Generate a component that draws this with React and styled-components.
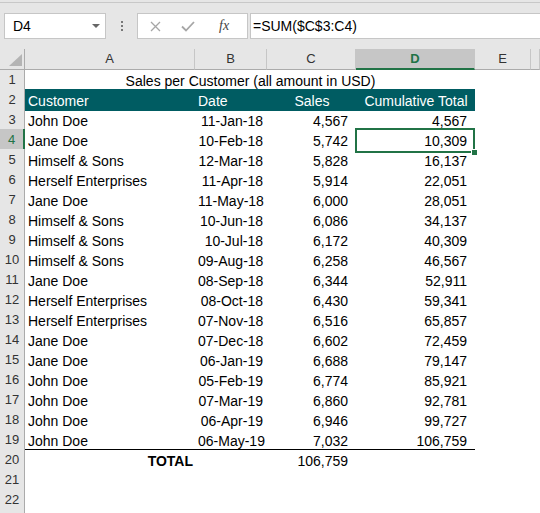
import React from "react";
import styled, { createGlobalStyle, css } from "styled-components";

const GREEN = "#217346";
const TEAL = "#005c62";
const COLS = "25px 170px 72px 89px 119px 56px 1fr";

const rows = [
  ["John Doe", "11-Jan-18", "4,567", "4,567"],
  ["Jane Doe", "10-Feb-18", "5,742", "10,309"],
  ["Himself & Sons", "12-Mar-18", "5,828", "16,137"],
  ["Herself Enterprises", "11-Apr-18", "5,914", "22,051"],
  ["Jane Doe", "11-May-18", "6,000", "28,051"],
  ["Himself & Sons", "10-Jun-18", "6,086", "34,137"],
  ["Himself & Sons", "10-Jul-18", "6,172", "40,309"],
  ["Himself & Sons", "09-Aug-18", "6,258", "46,567"],
  ["Jane Doe", "08-Sep-18", "6,344", "52,911"],
  ["Herself Enterprises", "08-Oct-18", "6,430", "59,341"],
  ["Herself Enterprises", "07-Nov-18", "6,516", "65,857"],
  ["Jane Doe", "07-Dec-18", "6,602", "72,459"],
  ["Jane Doe", "06-Jan-19", "6,688", "79,147"],
  ["John Doe", "05-Feb-19", "6,774", "85,921"],
  ["John Doe", "07-Mar-19", "6,860", "92,781"],
  ["John Doe", "06-Apr-19", "6,946", "99,727"],
  ["John Doe", "06-May-19", "7,032", "106,759"],
];

const GlobalStyle = createGlobalStyle`
  html, body {
    margin: 0;
    overflow: hidden;
    background: #fff;
    font-family: "Liberation Sans", Arial, sans-serif;
  }
`;

const Page = styled.div`
  width: 540px;
  height: 513px;
  overflow: hidden;
`;

//Formula bar
const RibbonEdge = styled.div`
  height: 2px;
  background: #e6e6e6;
  border-bottom: 1px solid #c8c8c8;
`;

const Toolbar = styled.div`
  display: flex;
  align-items: flex-start;
  height: 46px;
  box-sizing: border-box;
  padding: 10px 0 0 4px;
  background: #e6e6e6;
`;

const NameBox = styled.div`
  display: flex;
  align-items: center;
  justify-content: space-between;
  width: 102px;
  height: 26px;
  box-sizing: border-box;
  padding: 0 5px 0 8px;
  background: #fff;
  border: 1px solid #c6c6c6;
  font-size: 14px;
  color: #000;
`;

const Caret = styled.span`
  width: 0;
  height: 0;
  border-left: 4px solid transparent;
  border-right: 4px solid transparent;
  border-top: 4px solid #666;
`;

const Dots = styled.div`
  display: flex;
  flex-direction: column;
  align-items: center;
  justify-content: center;
  gap: 2px;
  width: 31px;
  height: 26px;
  span {
    width: 2px;
    height: 2px;
    background: #777;
  }
`;

const FxBox = styled.div`
  display: flex;
  align-items: center;
  width: 111px;
  height: 26px;
  box-sizing: border-box;
  padding-left: 12px;
  gap: 20px;
  background: #fff;
  border: 1px solid #c6c6c6;
  margin-right: 2px;
`;

const Fx = styled.span`
  font-family: "Liberation Serif", "Times New Roman", serif;
  font-style: italic;
  font-size: 14px;
  color: #444;
  margin-left: 4px;
`;

const FormulaInput = styled.div`
  flex: 1;
  height: 26px;
  box-sizing: border-box;
  padding-left: 2px;
  background: #fff;
  border: 1px solid #c6c6c6;
  border-right: none;
  font-size: 14px;
  line-height: 24px;
  color: #000;
`;

//Grid
const Row = styled.div`
  display: grid;
  grid-template-columns: ${COLS};
  height: 20px;
`;

const ColHead = styled.div`
  box-sizing: border-box;
  padding-top: 1px;
  background: ${(p) => (p.$active ? "#c6c6c6" : "#e6e6e6")};
  border-right: 1px solid #c6c6c6;
  border-bottom: ${(p) => (p.$active ? `2px solid ${GREEN}` : "1px solid #ababab")};
  font-size: 13px;
  line-height: 18px;
  text-align: center;
  color: ${(p) => (p.$active ? GREEN : "#333")};
  font-weight: ${(p) => (p.$active ? "bold" : "normal")};
`;

const Corner = styled(ColHead)`
  position: relative;
  border-right: 1px solid #ababab;
  svg {
    position: absolute;
    right: 2px;
    bottom: 3px;
  }
`;

const RowHead = styled.div`
  box-sizing: border-box;
  padding-top: 1px;
  background: ${(p) => (p.$active ? "#c6c6c6" : "#e6e6e6")};
  border-right: ${(p) => (p.$active ? `2px solid ${GREEN}` : "1px solid #ababab")};
  border-bottom: 1px solid #cfcfcf;
  font-size: 13px;
  line-height: 19px;
  text-align: center;
  color: ${(p) => (p.$active ? GREEN : "#333")};
`;

const Cell = styled.div`
  position: relative;
  box-sizing: border-box;
  padding: ${(p) => (p.$pad === "num" ? "2px 8px 0 3px" : p.$pad === "date" ? "2px 4px 0 3px" : "2px 2px 0 3px")};
  font-size: 14px;
  line-height: 20px;
  white-space: nowrap;
  text-align: ${(p) => p.$align || "left"};
  font-weight: ${(p) => (p.$bold ? "bold" : "normal")};
  color: #000;
  ${(p) => p.$span && css`grid-column: ${p.$span};`}
  ${(p) =>
    p.$head &&
    css`
      background: ${TEAL};
      color: #fff;
    `}
  ${(p) =>
    p.$rule &&
    css`
      box-shadow: inset 0 1px 0 #000;
    `}
  ${(p) =>
    p.$selected &&
    css`
      &::before {
        content: "";
        position: absolute;
        left: -1px;
        right: 0;
        top: -1px;
        bottom: -2px;
        border: 2px solid ${GREEN};
      }
      &::after {
        content: "";
        position: absolute;
        right: -2px;
        bottom: -4px;
        width: 5px;
        height: 5px;
        background: ${GREEN};
        border-left: 1px solid #fff;
        border-top: 1px solid #fff;
      }
    `}
`;

const Close = () => (
  <svg width="11" height="11" viewBox="0 0 11 11">
    <path d="M1 1 L10 10 M10 1 L1 10" stroke="#a6a6a6" strokeWidth="1.3" fill="none" />
  </svg>
);

const Check = () => (
  <svg width="14" height="11" viewBox="0 0 14 11">
    <path d="M1 5.5 L5 9.5 L13 1" stroke="#a6a6a6" strokeWidth="1.8" fill="none" />
  </svg>
);

const App = () => {
  return (
    <Page>
      <GlobalStyle />
      <RibbonEdge />
      <Toolbar>
        <NameBox>
          D4
          <Caret />
        </NameBox>
        <Dots>
          <span />
          <span />
          <span />
        </Dots>
        <FxBox>
          <Close />
          <Check />
          <Fx>fx</Fx>
        </FxBox>
        <FormulaInput>=SUM($C$3:C4)</FormulaInput>
      </Toolbar>

      <Row>
        <Corner>
          <svg width="13" height="12" viewBox="0 0 13 12">
            <path d="M13 0 L13 12 L0 12 Z" fill="#b4b4b4" />
          </svg>
        </Corner>
        {["A", "B", "C", "D", "E", ""].map((c) => (
          <ColHead key={c} $active={c === "D"}>
            {c}
          </ColHead>
        ))}
      </Row>

      <Row>
        <RowHead>1</RowHead>
        <Cell $span="2 / 6" $align="center">
          Sales per Customer (all amount in USD)
        </Cell>
      </Row>

      <Row>
        <RowHead>2</RowHead>
        <Cell $head>Customer</Cell>
        <Cell $head>Date</Cell>
        <Cell $head $align="center">Sales</Cell>
        <Cell $head $align="center">Cumulative Total</Cell>
      </Row>

      {rows.map(([name, date, sales, total], i) => (
        <Row key={i}>
          <RowHead $active={i === 1}>{i + 3}</RowHead>
          <Cell>{name}</Cell>
          <Cell $align="right" $pad="date">{date}</Cell>
          <Cell $align="right" $pad="num">{sales}</Cell>
          <Cell $align="right" $pad="num" $selected={i === 1}>
            {total}
          </Cell>
        </Row>
      ))}

      <Row>
        <RowHead>20</RowHead>
        <Cell $align="right" $bold $rule>TOTAL</Cell>
        <Cell $rule />
        <Cell $align="right" $pad="num" $rule>106,759</Cell>
        <Cell $rule />
      </Row>

      {[21, 22].map((n) => (
        <Row key={n}>
          <RowHead>{n}</RowHead>
        </Row>
      ))}
      <Row>
        <RowHead />
      </Row>
    </Page>
  );
};

export default App;
